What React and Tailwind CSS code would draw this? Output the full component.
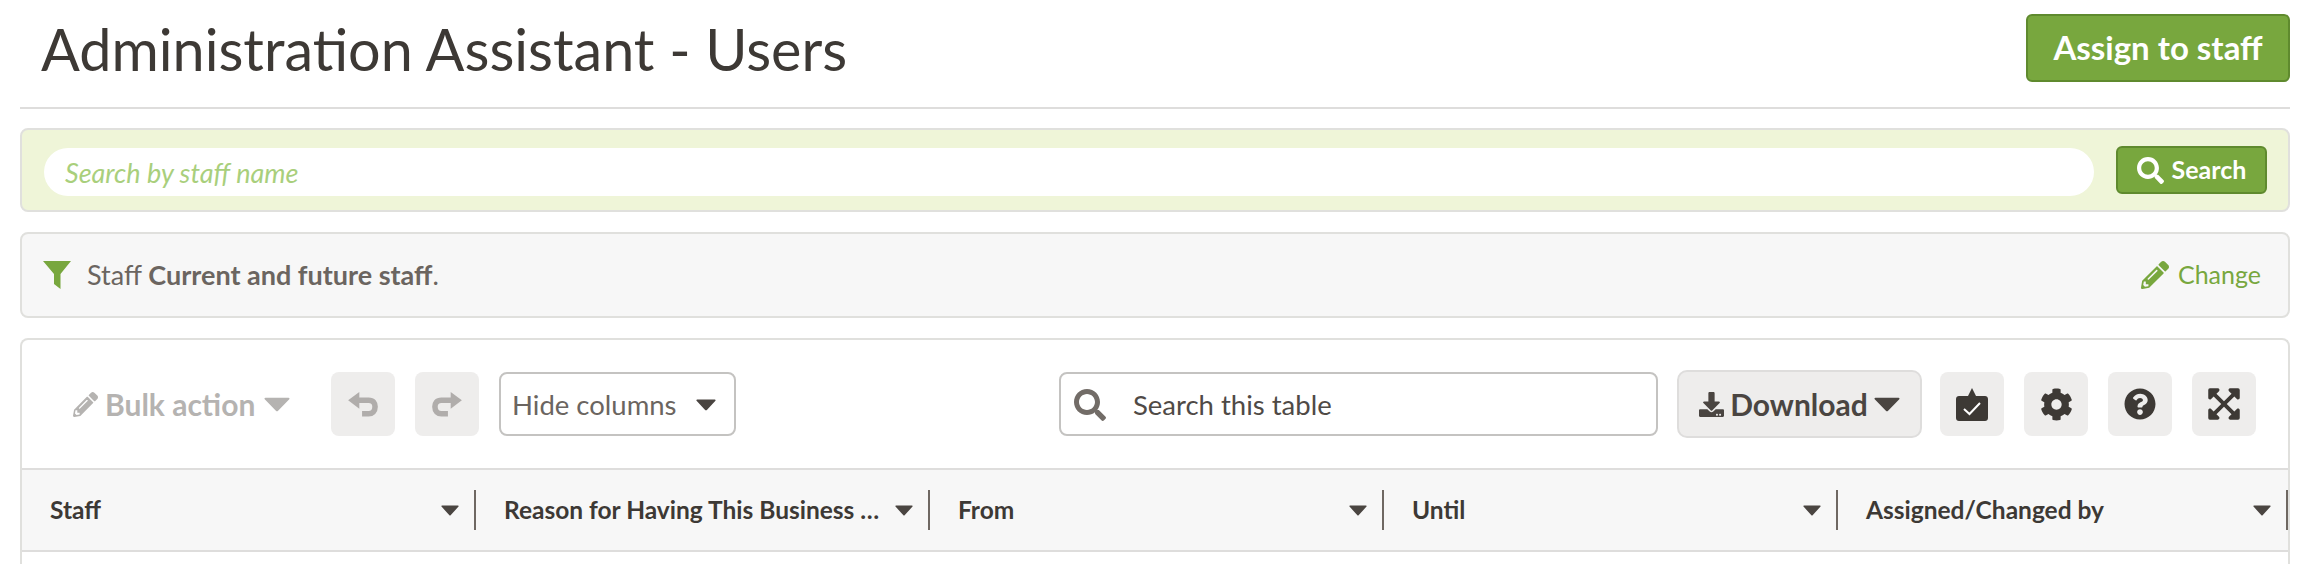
import React from "react";
import { FaSearch, FaPencilAlt, FaCog, FaQuestionCircle, FaExpandArrowsAlt, FaDownload } from "react-icons/fa";

const font = { fontFamily: '"Lato", "Liberation Sans", sans-serif' };

function Caret({ className }) {
  return (
    <svg viewBox="0 0 18 11" className={className} fill="currentColor" preserveAspectRatio="none">
      <path d="M1 .5h16c.6 0 .9.7.5 1.1L9.6 10.2c-.3.3-.9.3-1.2 0L.5 1.6C.1 1.2.4.5 1 .5z" />
    </svg>
  );
}

function FunnelIcon() {
  return (
    <svg viewBox="0 0 28 28" className="w-[28px] h-[28px] text-[#78a73e]" fill="currentColor">
      <path d="M0 0 H28 L17.500 13 V28 L11 23 V13 Z" />
    </svg>
  );
}

function UndoIcon({ flip }) {
  return (
    <svg viewBox="0 0 32 28" className={`w-[32px] h-[26px] text-[#b0adab] ${flip ? "-scale-x-100" : ""}`} fill="none" stroke="currentColor">
      <path d="M0 10 L12 1 V19 Z" fill="currentColor" stroke="none" />
      <path d="M10 10 H22 C27 10 29 13 29 17 C29 22 26 24.500 22 24.500 H15" strokeWidth="6" />
    </svg>
  );
}

function CheckIcon() {
  return (
    <svg viewBox="0 0 32 33" className="w-[32px] h-[33px] text-[#3d3935]">
      <path d="M16 0 L20 8 H29 C30.700 8 32 9.300 32 11 V30 C32 31.700 30.700 33 29 33 H3 C1.300 33 0 31.700 0 30 V11 C0 9.300 1.300 8 3 8 H12 Z" fill="currentColor" />
      <path d="M8 21 L13.500 26 L24 15" fill="none" stroke="#fff" strokeWidth="2" />
    </svg>
  );
}

function IconButton({ children }) {
  return (
    <button className="w-[64px] h-[64px] bg-[#eeedec] rounded-[8px] flex items-center justify-center shrink-0">
      {children}
    </button>
  );
}

function Column({ label }) {
  return (
    <div className="flex items-center h-full min-w-0">
      <span className="flex-1 min-w-0 truncate pl-[28px] text-[24.5px] font-bold text-[#3d3935]">{label}</span>
      <Caret className="w-[18px] h-[11px] ml-[6px] mr-[15px] text-[#4a4541] shrink-0" />
      <div className="w-[2px] h-[40px] bg-[#6f6862] shrink-0" />
    </div>
  );
}

export default function App() {
  return (
    <div style={font} className="w-[2304px] h-[564px] overflow-hidden bg-white pl-[20px] pr-[14px] flex flex-col">
      <header className="h-[109px] shrink-0 border-b-2 border-[#dedddc] flex items-start justify-between">
        <h1 className="pl-[21px] pt-[14px] text-[57.500px] leading-[70px] font-normal text-[#3d3935]">Administration Assistant - Users</h1>
        <button className="mt-[14px] w-[264px] h-[68px] bg-[#78a73e] border-2 border-[#5f8a2e] rounded-[6px] text-white font-bold text-[33px]">Assign to staff</button>
      </header>

      <section className="mt-[19px] h-[84px] shrink-0 bg-[#eff5d8] border-2 border-[#e0e0dd] rounded-[8px] flex items-start pl-[22px] pr-[21px] pt-[16px] gap-[22px]">
        <div className="flex-1 h-[48px] mt-[2px] pt-[2px] bg-white rounded-full flex items-center pl-[21px] text-[27px] italic text-[#a9cf7c]">Search by staff name</div>
        <button className="w-[151px] h-[48px] bg-[#78a73e] border-2 border-[#5f8a2e] rounded-[6px] text-white font-bold text-[25px] flex items-center justify-center gap-[8px]">
          <FaSearch className="w-[27px] h-[27px]" />
          Search
        </button>
      </section>

      <section className="mt-[20px] h-[86px] shrink-0 bg-[#f7f7f7] border-2 border-[#e0e0dd] rounded-[8px] flex items-center justify-between pl-[21px] pr-[27px]">
        <div className="flex items-center gap-[16px] text-[27px] text-[#6b6560]">
          <FunnelIcon />
          <span>Staff <b className="font-bold">Current and future staff</b>.</span>
        </div>
        <div className="flex items-center gap-[9px] text-[25px] text-[#78a73e]">
          <FaPencilAlt className="w-[28px] h-[28px]" />
          Change
        </div>
      </section>

      <section className="mt-[20px] flex-1 min-h-0 bg-white border-2 border-b-0 border-[#e0e0dd] rounded-t-[8px] flex flex-col">
        <div className="h-[128px] shrink-0 flex items-center pl-[51px] pr-[32px]">
          <div className="w-[258px] shrink-0 flex items-center gap-[7px] text-[#b5b3b1] text-[30px] font-bold">
            <FaPencilAlt className="w-[25px] h-[25px]" />
            Bulk action
            <Caret className="w-[26px] h-[15px] ml-[2px]" />
          </div>
          <IconButton><UndoIcon /></IconButton>
          <div className="w-[20px] shrink-0" />
          <IconButton><UndoIcon flip /></IconButton>
          <div className="w-[20px] shrink-0" />
          <div className="w-[237px] h-[64px] shrink-0 border-2 border-[#c4c3c1] rounded-[8px] flex items-center justify-between pl-[11px] pr-[18px] pt-[2px] text-[27.500px] text-[#6b6560]">
            Hide columns
            <Caret className="w-[20px] h-[12px] text-[#4a4541]" />
          </div>
          <div className="ml-auto flex items-center">
            <div className="w-[599px] h-[64px] border-2 border-[#c4c3c1] rounded-[8px] flex items-center pl-[13px] pt-[2px] text-[27.500px] text-[#4f4a46] gap-[27px]">
              <FaSearch className="w-[32px] h-[32px] text-[#726c67]" />
              Search this table
            </div>
            <button className="ml-[19px] w-[245px] h-[68px] bg-[#eeedec] border-2 border-[#dedddc] rounded-[10px] flex items-center justify-center gap-[6px] text-[30px] font-bold text-[#4a4541]">
              <FaDownload className="w-[25px] h-[25px]" />
              Download
              <Caret className="w-[26px] h-[15px]" />
            </button>
            <div className="ml-[18px] flex gap-[20px]">
              <IconButton><CheckIcon /></IconButton>
              <IconButton><FaCog className="w-[33px] h-[33px] text-[#3d3935]" /></IconButton>
              <IconButton><FaQuestionCircle className="w-[32px] h-[32px] text-[#3d3935]" /></IconButton>
              <IconButton><FaExpandArrowsAlt className="w-[36px] h-[36px] text-[#3d3935]" /></IconButton>
            </div>
          </div>
        </div>
        <div className="h-[84px] shrink-0 bg-[#f7f7f7] border-y-2 border-[#dedddc] grid grid-cols-[454px_454px_454px_454px_450px] items-center">
          <Column label="Staff" />
          <Column label="Reason for Having This Business Role" />
          <Column label="From" />
          <Column label="Until" />
          <Column label="Assigned/Changed by" />
        </div>
      </section>
    </div>
  );
}
